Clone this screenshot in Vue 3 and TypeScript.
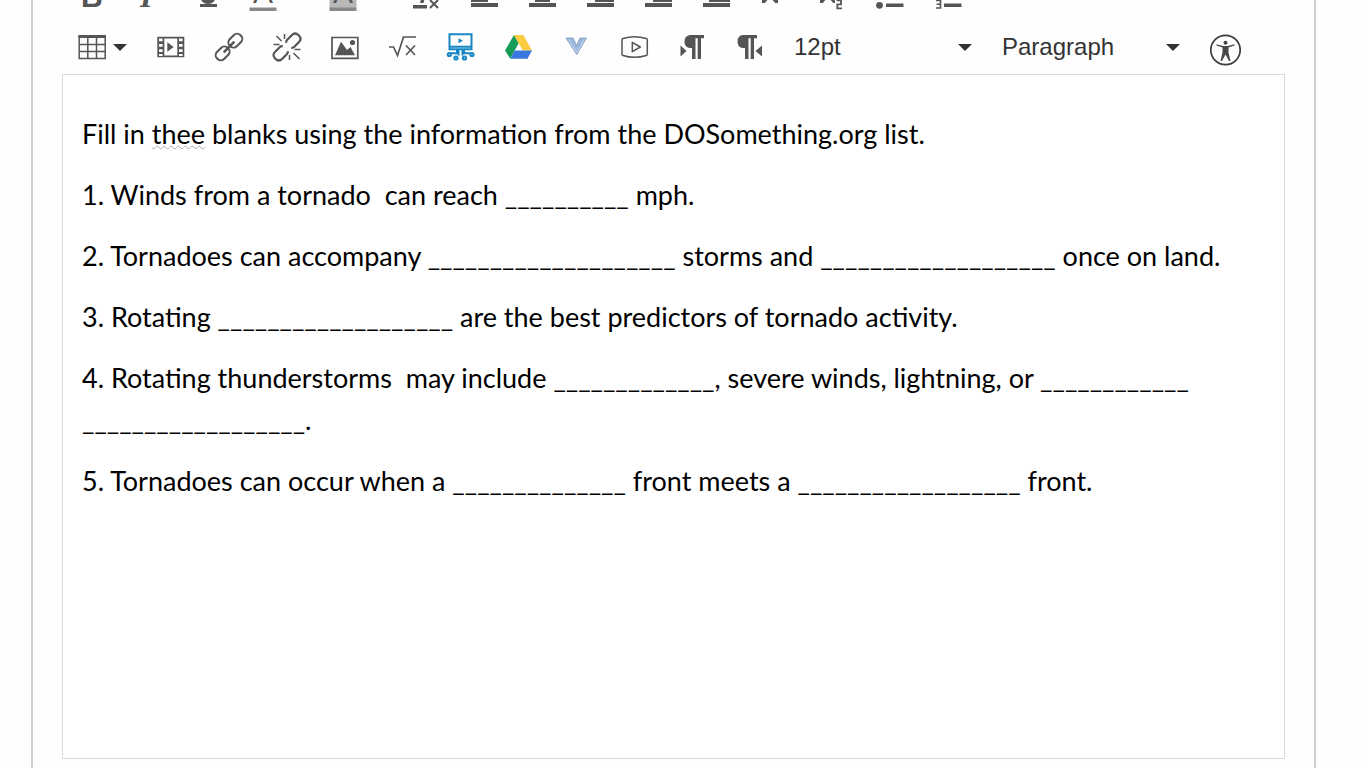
<script setup lang="ts">
import { ref } from 'vue'

const fontSize = ref('12pt')
const blockFormat = ref('Paragraph')
const fontSizes: string[] = ['8pt', '10pt', '12pt', '14pt', '18pt', '24pt', '36pt']
const blockFormats: string[] = ['Paragraph', 'Heading 2', 'Heading 3', 'Heading 4', 'Preformatted']

interface BarIcon {
  label: string
  x: number
  width: number
}

const alignments: BarIcon[] = [
  { label: 'Align left', x: 1, width: 17 },
  { label: 'Align center', x: 7, width: 15 },
  { label: 'Align right', x: 9, width: 19 },
  { label: 'Decrease indent', x: 9, width: 19 },
  { label: 'Increase indent', x: 7, width: 21 },
]

const blank = (count: number): string => '_'.repeat(count)
</script>

<template>
  <main class="panel">
    <div class="toolbar" role="toolbar" aria-label="Formatting">
      <div class="row row-format">
        <button type="button" class="tool" aria-label="Bold">
          <svg class="icon" viewBox="0 0 28 28"><text class="sans bold" x="3" y="26">B</text></svg>
        </button>
        <button type="button" class="tool" aria-label="Italic">
          <svg class="icon" viewBox="0 0 28 28"><text class="serif" x="4" y="26">I</text></svg>
        </button>
        <button type="button" class="tool" aria-label="Underline">
          <svg class="icon" viewBox="0 0 28 28">
            <path class="line" stroke-width="4" d="M8 2v13a6 6 0 0 0 12 0V2" />
            <path d="M6 23h17v3H6z" />
          </svg>
        </button>
        <button type="button" class="tool tool-color" aria-label="Text color">
          <svg class="icon" viewBox="0 0 28 28">
            <text class="sans" x="4" y="22">A</text>
            <path fill="#888" d="M.5 26.500h27V30H.5z" />
          </svg>
          <svg class="caret" viewBox="0 0 14 7"><path d="M0 0h14L7 7z" /></svg>
        </button>
        <button type="button" class="tool tool-color" aria-label="Background color">
          <svg class="icon" viewBox="0 0 28 28">
            <path fill="#b8b8b8" d="M.5 0h27v27H.5z" />
            <text class="sans" x="4" y="22">A</text>
            <path fill="#888" d="M.5 26.500h27V30H.5z" />
          </svg>
          <svg class="caret" viewBox="0 0 14 7"><path d="M0 0h14L7 7z" /></svg>
        </button>
        <button type="button" class="tool" aria-label="Clear formatting">
          <svg class="icon" viewBox="0 0 28 28">
            <path d="M4 2h20v3H16l-4.500 17H8L12.500 5H4zM1 24h14v3.500H1z" />
            <path class="line" stroke-width="2" d="M18 19l8 8M26 19l-8 8" />
          </svg>
        </button>
        <button v-for="bar in alignments" :key="bar.label" type="button" class="tool" :aria-label="bar.label">
          <svg class="icon" viewBox="0 0 28 28">
            <rect x="1" y="2" width="27" height="4" />
            <rect :x="bar.x" y="10" :width="bar.width" height="3" />
            <rect :x="bar.x" y="17" :width="bar.width" height="4" />
            <rect x="1" y="22" width="27" height="4" />
          </svg>
        </button>
        <button type="button" class="tool" aria-label="Superscript">
          <svg class="icon" viewBox="0 0 28 28"><path class="line" stroke-width="3.500" d="M3 5l13 15.200h2M17 5L4 20.200H2" /></svg>
        </button>
        <button type="button" class="tool" aria-label="Subscript">
          <svg class="icon" viewBox="0 0 28 28">
            <path class="line" stroke-width="3.500" d="M3 5l13 15.200h1M17 5L4 20.200H2" />
            <path class="line" stroke-width="1.800" d="M18.500 19.300H23v4h-3.700v4H24" />
          </svg>
        </button>
        <button type="button" class="tool" aria-label="Bulleted list">
          <svg class="icon" viewBox="0 0 28 28">
            <circle cx="3.500" cy="4.500" r="3.400" /><circle cx="3.500" cy="24.300" r="3.400" />
            <path d="M10 3h17v3H10zM10 12h17v4H10zM10 22.500h17.500V26H10z" />
          </svg>
        </button>
        <button type="button" class="tool" aria-label="Numbered list">
          <svg class="icon" viewBox="0 0 28 28">
            <path class="line" stroke-width="1.600" d="M2 19.500h4.500v7.500H2M2.500 23.300h4" />
            <path d="M10 3h17v3H10zM10 12h17v4H10zM10 22.500h17.500V26H10z" />
          </svg>
        </button>
      </div>

      <div class="row">
        <button type="button" class="tool tool-table" aria-label="Table">
          <svg class="icon" viewBox="0 0 28 28">
            <path class="line" stroke-width="1.500" d="M1.200 3h26v22.500h-26zM9.800 3v22.500M18.500 3v22.500M1.500 11.500h26M1.500 18.500h26" />
            <path d="M.5 2h27.400v3H.5z" />
          </svg>
          <svg class="caret" viewBox="0 0 14 7"><path d="M0 0h14L7 7z" /></svg>
        </button>
        <button type="button" class="tool" aria-label="Insert media">
          <svg class="icon" viewBox="0 0 28 28">
            <path fill-rule="evenodd" d="M.3 3.800h27v20.400H.3zM7.300 5.500v17h13v-17zM2 5.500v2.700h3.600V5.500zM2 11v2.700h3.600V11zM2 16.300V19h3.600v-2.700zM2 21v2h3.600v-2zM22 5.500v2.700h3.600V5.500zM22 11v2.700h3.600V11zM22 16.300V19h3.600v-2.700zM22 21v2h3.600v-2z" />
            <path d="M10.300 9.300v9.400l6.400-4.700z" />
          </svg>
        </button>
        <button type="button" class="tool" aria-label="Link">
          <svg class="icon" viewBox="0 0 28 28">
            <g class="line" stroke-width="2" transform="rotate(-45 14 14)">
              <rect x="-2.500" y="9" width="15" height="10" rx="4.500" />
              <rect x="15.500" y="9" width="15" height="10" rx="4.500" />
              <path stroke-width="2.500" stroke-linecap="round" d="M7.500 14h13" />
            </g>
          </svg>
        </button>
        <button type="button" class="tool" aria-label="Remove link">
          <svg class="icon" viewBox="0 0 28 28">
            <g class="line" stroke-width="2.200" transform="rotate(-45 14 14)">
              <path d="M11.500 10.500Q10.500 9 9 9H2Q-2.500 9-2.500 14T2 19h7q1.500 0 2.500-1.500M16.500 10.500Q17.500 9 19 9h7q4.500 0 4.500 5T26 19h-7q-1.500 0-2.500-1.500" />
            </g>
            <path class="line" stroke-width="1.500" d="M11.500 1v5M3.500 3l5 5M.5 11.500h6M16.500 22v5M20.500 20l6 6M21.500 16.500h6" />
          </svg>
        </button>
        <button type="button" class="tool" aria-label="Insert image">
          <svg class="icon" viewBox="0 0 28 28">
            <path class="line" stroke-width="1.700" d="M1 4.500h25.800v20.800H1z" />
            <path d="M4 22.200l6-13.500 6 8.300 3.500-3 4.500 8.200z" /><circle cx="21.500" cy="9.500" r="2.600" />
          </svg>
        </button>
        <button type="button" class="tool" aria-label="Equation">
          <svg class="icon" viewBox="0 0 28 28">
            <path class="line" stroke-width="1.700" d="M0 14h4.500L8.500 22.500 14.500 4H27M17 12.500l9 9.500M26 12.500L17 22" />
          </svg>
        </button>
        <button type="button" class="tool" aria-label="Media library">
          <svg class="icon studio" viewBox="0 0 28 28">
            <path d="M2.500 1.300h22v15h-22zM2.500 13.800h22M10 17v3.200H3.500M17 17v3.200h6.500M11.500 17v5.500M15.500 17v5.500" />
            <path class="studio-fill" d="M11.500 5.300v5l4.500-2.500z" />
            <circle cx="2.300" cy="21.500" r="1.600" /><circle cx="9" cy="25" r="1.600" />
            <circle cx="17.500" cy="25" r="1.600" /><circle cx="25" cy="21.500" r="1.600" />
          </svg>
        </button>
        <button type="button" class="tool" aria-label="Google Drive">
          <svg class="icon" viewBox="0 0 28 28">
            <path fill="#169b59" d="M9 2l4.700 8L5.300 25.700 0 17.500z" />
            <path fill="#fbcb42" d="M9 2h9.300L27 17.500h-9.200z" />
            <path fill="#3978df" d="M9.800 17.500H27l-4.500 8.200H5.300z" />
          </svg>
        </button>
        <button type="button" class="tool" aria-label="Vericite">
          <svg class="icon" viewBox="0 0 28 28">
            <path fill="#9bb8dc" stroke="#7d95b8" stroke-width=".8" d="M3 5h7l3.700 7.500L17 5h6.500L13.800 21.500z" />
            <path fill="none" stroke="#c5d8ef" stroke-width="1" d="M5.500 6.500l8.200 13 7.800-13" />
          </svg>
        </button>
        <button type="button" class="tool" aria-label="Embed video">
          <svg class="icon" viewBox="0 0 28 28">
            <path class="line" stroke-width="1.500" stroke-linejoin="round" d="M2 5.500Q13.500 1.800 25.300 5.500q1 .3 1 1.500v14q0 1.200-1 1.500-11.800 3.700-23.300 0-1-.3-1-1.500V7q0-1.200 1-1.500zM11.300 9.300v9.400l8-4.700z" />
          </svg>
        </button>
        <button type="button" class="tool" aria-label="Left to right">
          <svg class="icon" viewBox="0 0 28 28">
            <path d="M11 2h14v3.300h-3V26h-3.300V5.300h-2.200V26H13V15h-2.500Q5.500 14.300 5.500 8.500T11 2zM1.500 12.500v11L7.500 18z" />
          </svg>
        </button>
        <button type="button" class="tool" aria-label="Right to left">
          <svg class="icon" viewBox="0 0 28 28">
            <path d="M6 2h14v3.300h-3V26h-3.300V5.300h-2.200V26H8V15H6Q.5 14.500.5 8.500T6 2zM25 12.500v11L18.500 18z" />
          </svg>
        </button>
        <label class="picker">
          <select v-model="fontSize" aria-label="Font size">
            <option v-for="size in fontSizes" :key="size">{{ size }}</option>
          </select>
          <svg class="caret" viewBox="0 0 14 7"><path d="M0 0h14L7 7z" /></svg>
        </label>
        <label class="picker">
          <select v-model="blockFormat" aria-label="Block format">
            <option v-for="format in blockFormats" :key="format">{{ format }}</option>
          </select>
          <svg class="caret" viewBox="0 0 14 7"><path d="M0 0h14L7 7z" /></svg>
        </label>
        <button type="button" class="tool tool-checker" aria-label="Accessibility checker">
          <svg class="checker" viewBox="0 0 32 32">
            <circle class="line" cx="16.500" cy="16" r="14.700" stroke-width="1.700" />
            <circle cx="16.500" cy="8.800" r="2" />
            <path d="M7.500 10.300l6.500 1.700h5l6.500-1.700v1.200l-6 2v5l2 8.500H20l-3.500-6.500L13 27h-1.500l2-8.500v-5l-6-2z" />
          </svg>
        </button>
      </div>
    </div>

    <div class="document" contenteditable="true" role="textbox" aria-multiline="true" aria-label="Rich content" spellcheck="false">
      <p>Fill in <span class="misspelled">thee</span> blanks using the information from the DOSomething.org list.</p>
      <p>1. Winds from a tornado&nbsp; can reach {{ blank(10) }} mph.</p>
      <p>2. Tornadoes can accompany {{ blank(20) }} storms and {{ blank(19) }} once on land.</p>
      <p>3. Rotating {{ blank(19) }} are the best predictors of tornado activity.</p>
      <p>4. Rotating thunderstorms&nbsp; may include {{ blank(13) }}, severe winds, lightning, or {{ blank(12) }} {{ blank(18) }}.</p>
      <p>5. Tornadoes can occur when a {{ blank(14) }} front meets a {{ blank(18) }} front.</p>
    </div>
  </main>
</template>

<style>
body {
  margin: 0;
  overflow: hidden;
  background: #fefefe;
}
</style>

<style scoped>
.panel {
  box-sizing: border-box;
  min-height: 100vh;
  margin: 0 50px 0 31px;
  padding: 0 29px 29px;
  border: solid #d0d0d0;
  border-width: 0 2px;
}
.toolbar {
  margin-top: -31px;
  padding: 0 1px 1px;
}
.row {
  display: flex;
  align-items: center;
  height: 52px;
}
.tool {
  display: flex;
  flex: none;
  align-items: center;
  justify-content: center;
  width: 58px;
  height: 52px;
  padding: 0;
  border: 0;
  background: none;
}
.tool-color {
  justify-content: flex-start;
  gap: 10px;
  width: 80px;
  padding-left: 12px;
}
.tool-table {
  justify-content: flex-start;
  gap: 7px;
  width: 79px;
  padding-left: 15px;
}
.tool-checker {
  padding-top: 5px;
}
.icon {
  width: 28px;
  height: 28px;
  overflow: visible;
  fill: #555;
}
.checker {
  width: 32px;
  height: 32px;
  fill: #484848;
}
.checker .line {
  stroke: #3c3c3c;
}
.caret {
  width: 14px;
  height: 7px;
  fill: #333;
}
.line {
  fill: none;
  stroke: #555;
}
.studio {
  fill: none;
  stroke: #1687c4;
  stroke-width: 2;
}
.studio-fill {
  fill: #1687c4;
  stroke: none;
}
.sans {
  font: 30px "Liberation Sans", Arial, sans-serif;
}
.bold {
  font-weight: 700;
}
.serif {
  font: italic bold 32px "Liberation Serif", "Times New Roman", serif;
}
.picker {
  display: flex;
  align-items: center;
  width: 208px;
  height: 52px;
}
.picker select {
  width: 178px;
  height: 36px;
  padding: 0 0 2px 14px;
  border: 0;
  appearance: none;
  background: none;
  color: #333;
  font: 24px "Liberation Sans", Arial, sans-serif;
}
.picker .caret {
  flex: none;
}
.document {
  box-sizing: border-box;
  min-height: 685px;
  padding: 38px 19px;
  border: 1px solid #dadada;
  background: #fff;
  color: #000;
  font: 27px/42px Lato, sans-serif;
  outline: 0;
}
.document p {
  margin: 0 0 19px;
}
.misspelled {
  text-decoration: underline wavy #aaa 1px;
  text-underline-offset: 1px;
}
</style>
